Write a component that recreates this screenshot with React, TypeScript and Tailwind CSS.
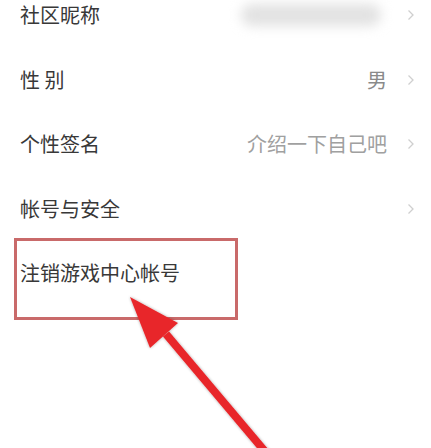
import React from "react";

const Chevron = () => (
  <svg width="8" height="12" viewBox="0 0 8 12" className="shrink-0">
    <path d="M1.5 1.5 L6 6 L1.5 10.5" fill="none" stroke="#cfcfcf" strokeWidth="1.3" />
  </svg>
);

const Row = ({ label, children }: { label: string; children?: React.ReactNode }) => (
  <div className="h-[64.5px] flex items-center justify-between pl-5 pr-[16px]">
    <span className="text-[20px] leading-none text-[#383838]">{label}</span>
    <div className="flex items-center gap-[20px]">{children}</div>
  </div>
);

export default function App() {
  return (
    <div
      className="relative w-[431px] h-[448px] bg-white overflow-hidden"
      style={{ fontFamily: '"Noto Sans CJK SC", "Noto Sans", sans-serif' }}
    >
      <div className="flex flex-col -mt-[17px]">
        <Row label="社区昵称">
          <div className="w-[140px] h-[22px] rounded-full bg-[#e2e2e2] blur-[6px] mr-[6px]" />
          <Chevron />
        </Row>
        <Row label="性 别">
          <span className="text-[20px] leading-none text-[#8a8a8a]">男</span>
          <Chevron />
        </Row>
        <Row label="个性签名">
          <span className="text-[20px] leading-none text-[#a0a0a0]">介绍一下自己吧</span>
          <Chevron />
        </Row>
        <Row label="帐号与安全">
          <Chevron />
        </Row>
        <Row label="注销游戏中心帐号" />
      </div>

      <div className="absolute left-[14px] top-[238px] w-[224px] h-[82px] border-[3px] border-[#c96a6a]" />

      <svg className="absolute left-0 top-0" width="431" height="448" viewBox="0 0 431 448">
        <defs>
          <filter id="sh" x="-20%" y="-20%" width="140%" height="140%">
            <feGaussianBlur in="SourceAlpha" stdDeviation="1.5" />
            <feOffset dx="0" dy="0" />
            <feComponentTransfer>
              <feFuncA type="linear" slope="0.35" />
            </feComponentTransfer>
            <feMerge>
              <feMergeNode />
              <feMergeNode in="SourceGraphic" />
            </feMerge>
          </filter>
        </defs>
        <g filter="url(#sh)">
          <line x1="166" y1="334" x2="268" y2="455" stroke="#e8272b" strokeWidth="8" />
          <polygon points="130,297 178,323 150,348" fill="#e8272b" />
        </g>
      </svg>
    </div>
  );
}
